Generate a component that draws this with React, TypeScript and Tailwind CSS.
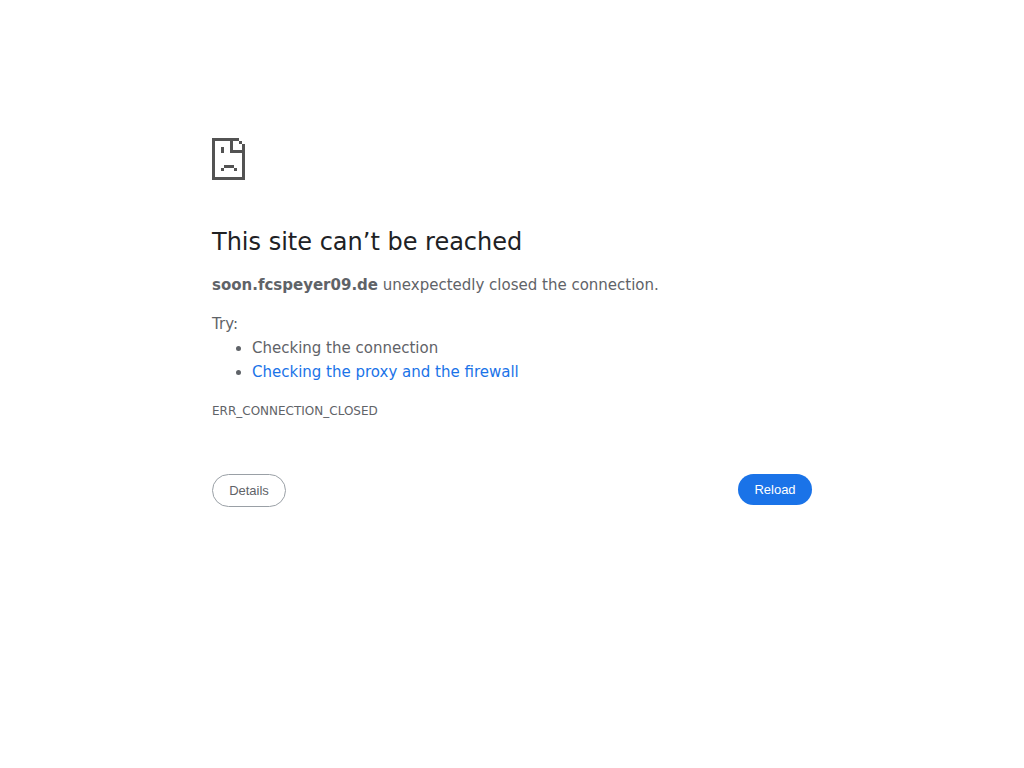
function SadPageIcon() {
  return (
    <svg
      className="block h-[42px] w-[33px]"
      viewBox="0 0 33 42"
      fill="#535353"
      shapeRendering="crispEdges"
      aria-hidden="true"
    >
      <path d="M0 0H27V3H21V12H30V6H33V42H0ZM3 3V39H30V15H18V3Z" fillRule="evenodd" />
      <path d="M27 3H30V6H27Z" />
      <path d="M9 9H12V15H9Z" />
      <path d="M12 27H22V30H25V33H22V30H12V33H9V30H12Z" />
    </svg>
  );
}

export default function App() {
  return (
    <div className="min-h-screen bg-white font-['DejaVu_Sans',sans-serif] text-[15px] leading-6 text-[#5f6368]">
      <main className="mx-auto w-full max-w-[600px] pt-[138px]">
        <SadPageIcon />
        <h1 className="mt-[47px] mb-4 text-2xl leading-[30px] font-medium text-[#202124]">
          This site can’t be reached
        </h1>
        <p>
          <strong className="font-bold">soon.fcspeyer09.de</strong> unexpectedly closed the connection.
        </p>
        <div className="mt-[15px]">
          <p>Try:</p>
          <ul className="list-disc pl-10">
            <li>Checking the connection</li>
            <li>
              <a href="#buttons" className="text-[#1a73e8]">
                Checking the proxy and the firewall
              </a>
            </li>
          </ul>
        </div>
        <p className="mt-[15px] text-xs leading-6">ERR_CONNECTION_CLOSED</p>
        <div
          id="buttons"
          className="mt-[51px] flex items-start justify-between font-['Liberation_Sans',sans-serif] text-[13px] leading-[15px]"
        >
          <button
            type="button"
            className="min-w-[74px] cursor-pointer rounded-full border border-[#9aa0a6] bg-white px-4 py-2"
          >
            Details
          </button>
          <button
            type="button"
            className="min-w-[74px] cursor-pointer rounded-full bg-[#1a73e8] px-4 py-2 text-white"
          >
            Reload
          </button>
        </div>
      </main>
    </div>
  );
}
